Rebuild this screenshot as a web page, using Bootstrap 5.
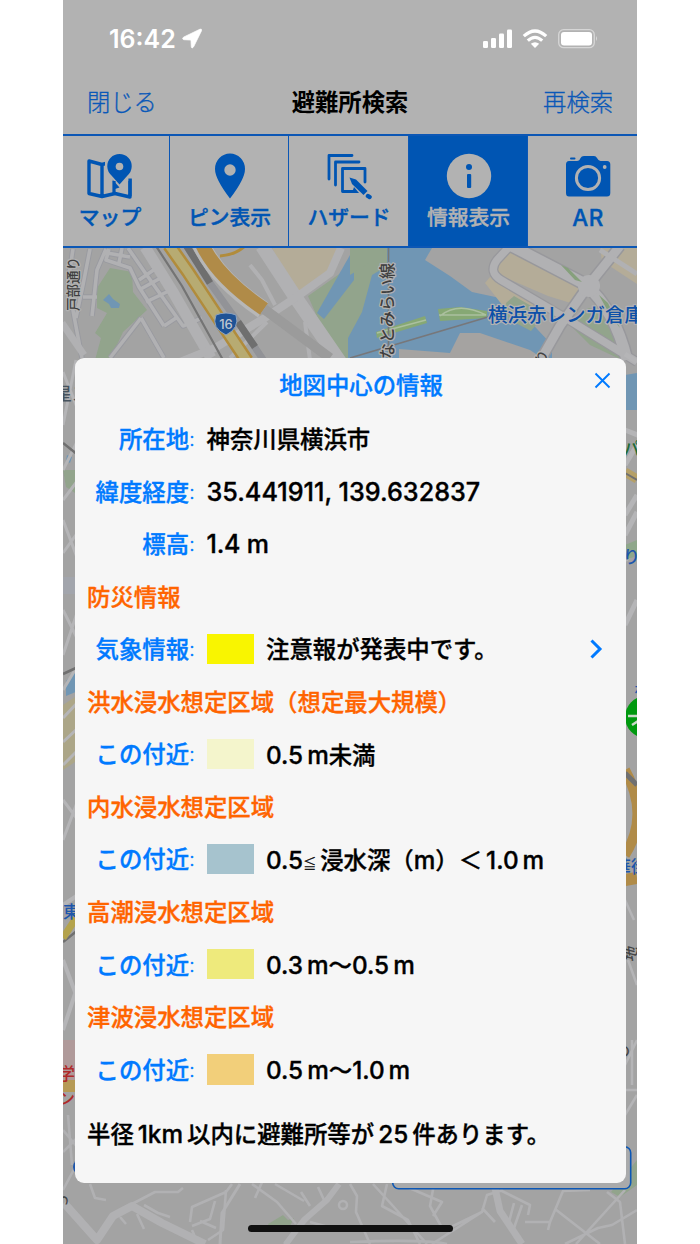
<!DOCTYPE html>
<html lang="ja">
<head>
  <meta charset="UTF-8">
  <meta name="viewport" content="width=device-width, initial-scale=1">
  <title>避難所検索</title>
  <link href="https://cdn.jsdelivr.net/npm/bootstrap@5.3.0/dist/css/bootstrap.min.css" rel="stylesheet">
  <style>
    body {
      background: #fff;
      font-family: Inter, "Noto Sans CJK JP", sans-serif;
      font-weight: 500;
      line-height: 1;
      overflow: hidden;
    }
    .phone { width: 574px; height: 1244px; background: #b2b2b2; }
    .status-bar { height: 78px; padding: 0 39px 0 46px; color: #fff; }
    .clock { font-size: 25px; font-weight: 600; }
    .title-bar { height: 56px; padding: 0 24px 6px; font-size: 23.3px; }
    .title-bar a { color: #0a58b8; font-weight: 300; text-decoration: none; width: 80px; -webkit-text-stroke: .3px #0a58b8; }
    .title-bar h1 { font-size: 23.3px; color: #000; font-weight: 700; }
    .tabs { height: 114px; margin: 0 -13px; border-top: 2px solid #0c57b5; border-bottom: 2px solid #0c57b5; }
    .tab-item { width: 119.5px; padding: 16px 0 0 1.5px; color: #0055b3; font-size: 20.8px; border-right: 1.5px solid #0c57b5; -webkit-text-stroke: .4px; }
    .tab-item.active { background: #0055b3; color: #b2b2b2; }
    .tab-item span { margin-top: 8px; }
    .tab-item .latin { font-size: 22.5px; margin-top: 7px; letter-spacing: .5px; }
    .map-area svg.map { position: absolute; left: 0; top: 0; }
    .info-panel { width: 551px; height: 825px; margin: 110px 0 0 11.5px; background: #f6f6f6; border-radius: 9px; font-size: 23.4px; color: #000; padding: 0 12.5px; -webkit-text-stroke: .35px; }
    .panel-title { height: 54.5px; color: #007aff; padding: 2px 0 0 22px; }
    .panel-title h2 { font-size: 23.4px; font-weight: 500; }
    .panel-close { position: absolute; right: 15px; top: 14px; }
    .info-row { height: 52.55px; }
    .info-row > .txt, .section-name { padding-top: 2px; }
    .info-label { width: 107.500px; color: #007aff; text-align: right; margin-right: 12px; white-space: nowrap; }
    .info-label::after { content: ":"; font-weight: 300; font-size: 19px; position: relative; top: -2px; }
    .section-name { color: #ff6400; }
    .swatch { width: 47px; height: 30.5px; margin-right: 12.5px; }
    .s-warn { background: #f9f500; }
    .s-flood { background: #f4f5cc; }
    .s-inland { background: #a6c3ce; }
    .s-surge { background: #eeea7c; }
    .s-tsunami { background: #f2cf7a; }
    .num { font-size: 24.3px; }
    .num-long { font-size: 25.2px; }
    .num-alt { font-size: 25px; letter-spacing: -.2px; }
    .gap-l { margin-left: 4px; }
    .gap-r { margin-right: 4px; }
    .leq { font-size: 13px; font-weight: 300; margin-right: 4px; position: relative; top: -1px; }
    .summary { height: 78px; }
    .home-bar { position: absolute; left: 185px; bottom: 12px; width: 205px; height: 7px; background: #101010; border-radius: 4px; }
  </style>
</head>
<body>
  <div class="phone mx-auto position-relative overflow-hidden d-flex flex-column">

    <div class="status-bar d-flex align-items-center justify-content-between flex-shrink-0">
      <div class="d-flex align-items-center">
        <span class="clock">16:42</span>
        <svg class="ms-1" width="24" height="22" viewBox="0 0 24 22"><path d="M20 1.200 L3.500 9.200 Q1.500 11.500 4.500 11.700 L11 12 L11.300 18.500 Q11.700 21.500 13.600 18.800 L21.500 2.700 Q22 .7 20 1.200Z" fill="#fff" stroke="#fff" stroke-width=".8" stroke-linejoin="round"/></svg>
      </div>
      <svg width="117" height="20" viewBox="0 0 117 20">
        <g fill="#fff">
          <rect x="2" y="12" width="5" height="7" rx="1.300"/>
          <rect x="10" y="9" width="5" height="10" rx="1.300"/>
          <rect x="18" y="4.500" width="5" height="14.500" rx="1.300"/>
          <rect x="26" y="0.500" width="5" height="18.500" rx="1.300"/>
          <path d="M54 19 L49.800 14.800 Q54 11.500 58.200 14.800Z"/>
          <rect x="80" y="3" width="31" height="13.500" rx="3"/>
          <path d="M115 7 q2 2.500 0 5z" opacity=".5"/>
        </g>
        <g fill="none" stroke="#fff" stroke-width="3.200">
          <path d="M42.800 7.200 Q54 -3.200 65.200 7.200"/>
          <path d="M46.800 11.600 Q54 5 61.200 11.600"/>
        </g>
        <rect x="77.700" y="0.700" width="35.600" height="18" rx="5" fill="none" stroke="#d6d6d6" stroke-width="1.300"/>
      </svg>
    </div>

    <nav class="title-bar d-flex align-items-center justify-content-between flex-shrink-0">
      <a href="#">閉じる</a>
      <h1 class="m-0">避難所検索</h1>
      <a href="#" class="text-end">再検索</a>
    </nav>

    <div class="tabs d-flex flex-shrink-0">
      <div class="tab-item flex-shrink-0 d-flex flex-column align-items-center">
        <svg width="48" height="48" viewBox="86 152 48 48">
          <path d="M89 161 L102 164.500 L115 161 L130 165 V197 L115 193.500 L102 196.500 L89 193.500Z M102 164.500 V196.500" fill="none" stroke="#0055b3" stroke-width="3.400" stroke-linejoin="round"/>
          <path d="M105 150 H134 V177 L127 182 L121 190 L114 183 L105 177Z" fill="#b2b2b2"/>
          <path d="M114 181 V193.500 M130 178.500 V196" stroke="#0055b3" stroke-width="3.200"/>
          <path d="M112.500 179.500 L119.500 187.500 L115 189Z" fill="#0055b3"/>
          <path d="M119.500 184.500 L111.500 175.500 A12.200 12.200 0 1 1 127.500 175.500Z" fill="#0055b3"/>
          <circle cx="119.500" cy="166.500" r="3.800" fill="#b2b2b2"/>
        </svg>
        <span>マップ</span>
      </div>
      <div class="tab-item flex-shrink-0 d-flex flex-column align-items-center">
        <svg width="48" height="48" viewBox="205 152 48 48">
          <path d="M229 198.500 Q214 179 214 169 A15 15.500 0 0 1 244 169 Q244 179 229 198.500Z" fill="#0055b3"/>
          <circle cx="229" cy="170" r="5.700" fill="#b2b2b2"/>
        </svg>
        <span>ピン表示</span>
      </div>
      <div class="tab-item flex-shrink-0 d-flex flex-column align-items-center">
        <svg width="48" height="48" viewBox="324 152 48 48">
          <g fill="none" stroke="#0055b3" stroke-width="2.800" stroke-linecap="round" stroke-linejoin="round">
            <path d="M328 179 V155.500 H351"/>
            <path d="M334.500 185 V162 H358"/>
            <path d="M354 191.500 H341.500 V168.500 H364 V182"/>
          </g>
          <path d="M348.500 177.500 L355 179.500 L366.500 191 L362.500 195 L351 184Z" fill="#0055b3"/>
          <path d="M353 187 L358 192.900 H351" fill="#0055b3"/>
          <path d="M367 196 L368.500 197" stroke="#0055b3" stroke-width="4.500" stroke-linecap="round"/>
        </svg>
        <span>ハザード</span>
      </div>
      <div class="tab-item active flex-shrink-0 d-flex flex-column align-items-center">
        <svg width="48" height="48" viewBox="444 152 48 48">
          <circle cx="468" cy="176" r="22.200" fill="#b2b2b2"/>
          <circle cx="468" cy="167" r="3" fill="#0055b3"/>
          <rect x="466" y="174" width="4.200" height="14" rx="1" fill="#0055b3"/>
        </svg>
        <span>情報表示</span>
      </div>
      <div class="tab-item flex-shrink-0 d-flex flex-column align-items-center">
        <svg width="48" height="48" viewBox="564 152 48 48">
          <path d="M569 161 H577 Q579.500 161 580.500 158 Q581.500 156 584 156 H594 Q596 156 597 158 Q598.500 161 600.500 161 H607 Q610.300 161 610.300 164.500 V193 Q610.300 196.500 607 196.500 H569 Q566 196.500 566 193 V164.500 Q566 161 569 161Z" fill="#0055b3"/>
          <rect x="570" y="157.500" width="5.500" height="2" rx="1" fill="#0055b3"/>
          <circle cx="588" cy="178" r="11.600" fill="none" stroke="#b2b2b2" stroke-width="3"/>
          <circle cx="604.700" cy="167" r="1.900" fill="#b2b2b2"/>
        </svg>
        <span class="latin">AR</span>
      </div>
    </div>

    <div class="map-area position-relative flex-grow-1">
      <svg class="map" width="574" height="996" viewBox="63 248 574 996" font-family="Inter, 'Noto Sans CJK JP', sans-serif">
        <rect x="63" y="248" width="574" height="996" fill="#a3a3a3"/>

        <!-- parks, water and blocks above the panel -->
        <path d="M110 268 L132 272 L133 292 L147 310 L123 332 L110 360 H95 L101 338 L95 333 L107 313 L97 308 V288Z" fill="#92a48c"/>
        <path d="M103 300 L109 294 L113 299 L120 304 L119 308 L111 308 L109 304Z" fill="#7096b4"/>
        <path d="M272 248 H341 L330 275 L310 290 L295 292Z" fill="#b4ac98"/>
        <path d="M308 296 L345 270 L366 248 H391 V280 L368 360 H336Z" fill="#92a48c"/>
        <path d="M354 248 L317 313 L324 319 L354 280Z" fill="#7096b4"/>
        <path d="M387 248 H432 L425 260 L450 276 L472 292 L500 298 L524 315 L552 345 V360 H348 V338 L362 312 L372 275 L387 266Z" fill="#7096b4"/>
        <path d="M399 349 L450 353 L460 333 L480 333 L530 350 L545 360 H399Z" fill="#a5a3a1"/>
        <path d="M350 275 L371 262 L387 248 H350Z" fill="#92a48c"/>
        <path d="M497 260 L511 247 L524 251 L585 284 L574 304 L548 296 L497 274Z" fill="#b4ac98"/>
        <path d="M485 283 L490 277 L535 303 L524 318 L503 306Z" fill="#b4ac98"/>
        <path d="M506 303 L514 296 L545 314 L531 331 L508 319Z" fill="#92a48c"/>
        <path d="M600 248 H637 V284 L602 261Z" fill="#b4ac98"/>
        <path d="M571 326 L588 308 L606 310 L628 356 L622 360 L590 345Z" fill="#92a48c"/>
        <path d="M376 332 L425 316 L427 323 L377 338Z M438 309 L460 307 L487 311 V318 L440 321Z" fill="#86a874"/>
        <path d="M377 333 L426 320 M439 315 L486 315 M440 316 Q458 301 486 315" stroke="#abc09f" stroke-width="1.500" fill="none"/>
        <path d="M350 358 L488 317" stroke="#77777a" stroke-width="1.800"/>
        <path d="M388.500 248 V359" stroke="#777" stroke-width="1.600"/>

        <!-- local streets -->
        <g fill="none" stroke="#999aa0" stroke-width="5.500" stroke-linejoin="round">
          <path d="M90 249 L83 285 L76 318 M73 249 L68 282 L74 316 L82 358 M106 249 L97 270 L92 316 M83 297 H97 M109 249 L106 260 L130 268 L139 287 L164 326 M128 248 L146 274 L183 326 L202 318 M139 290 L166 275 M146 302 L175 288 M158 267 L139 280 M164 326 L176 318 M107 253 L130 257 M122 248 L119 263 M141 318 L110 358 M141 318 L164 358"/>
        </g>
        <g fill="none" stroke="#b1b1b3" stroke-width="3.600" stroke-linejoin="round">
          <path d="M90 249 L83 285 L76 318 M73 249 L68 282 L74 316 L82 358 M106 249 L97 270 L92 316 M83 297 H97 M109 249 L106 260 L130 268 L139 287 L164 326 M128 248 L146 274 L183 326 L202 318 M139 290 L166 275 M146 302 L175 288 M158 267 L139 280 M164 326 L176 318 M107 253 L130 257 M122 248 L119 263 M141 318 L110 358 M141 318 L164 358"/>
        </g>
        <g fill="none" stroke="#b1b1b3">
          <path d="M145 247 L173 292 L211 358" stroke-width="11"/>
          <path d="M262 246 L296 298 L340 362" stroke-width="14"/>
          <path d="M180 362 L215 348 L263 319 L298 296 L330 273 L341 248" stroke-width="8"/>
          <path d="M62 323 L84 355" stroke-width="7"/>
          <path d="M230 358 L267 322 M305 322 L310 360 M250 265 L262 280 L275 305" stroke-width="4"/>
        </g>
        <path d="M156 246 L182 286 L223 360" stroke="#747474" stroke-width="2.200" fill="none"/>
        <path d="M169 245 L188 272 L221 322 L247 361" stroke="#b18c3c" stroke-width="14" fill="none"/>
        <path d="M169 245 L188 272 L221 322 L247 361" stroke="#b7ab72" stroke-width="9" fill="none"/>
        <path d="M186 245 L210 283 L238 322 L264 361" stroke="#929397" stroke-width="7" fill="none"/>
        <path d="M186 245 L210 283 M238 322 L255 347" stroke="#6f6f6f" stroke-width="7" fill="none"/>
        <path d="M201 244 Q216 278 263 310" stroke="#b7b7b7" stroke-width="18" fill="none"/>
        <path d="M202 244 Q217 277 264 309" stroke="#b08b48" stroke-width="14" fill="none"/>
        <path d="M220 256 Q235 255 245 246" stroke="#b18c3c" stroke-width="3" fill="none"/>
        <path d="M264 309 L330 358" stroke="#9b9b9b" stroke-width="10" fill="none"/>

        <!-- harbour streets -->
        <g fill="none" stroke="#98989c" stroke-linejoin="round">
          <path d="M510 246 L497 260 Q488 272 501 280 L564 317 L637 362" stroke-width="10"/>
          <path d="M512 246 L585 284 Q615 310 627 360" stroke-width="14"/>
          <path d="M620 246 L588 286 L560 326 L540 361" stroke-width="12"/>
        </g>
        <g fill="none" stroke="#b1b1b3" stroke-linejoin="round">
          <path d="M510 246 L497 260 Q488 272 501 280 L564 317 L637 362" stroke-width="7.500"/>
          <path d="M512 246 L585 284 Q615 310 627 360" stroke-width="11"/>
          <path d="M620 246 L588 286 L560 326 L540 361" stroke-width="9"/>
          <path d="M600 250 L637 274" stroke-width="5"/>
        </g>
        <circle cx="589" cy="286" r="11" fill="#b1b1b3"/>
        <path d="M561 265 L568 268 L582 282 L575 280Z M599 295 L608 303 L620 328 L610 315Z" fill="#86a07c"/>

        <!-- strip left of the panel -->
        <path d="M63 470 H78 V495 L66 487Z" fill="#92a48c"/>
        <path d="M67 455 l5 2 -2 6 -4 -2Z M66 681 l8 -8 h4 v18 l-12 5Z" fill="#7096b4"/>
        <rect x="63" y="577" width="15" height="17" fill="#a2a5ac"/>
        <path d="M63 705 L78 695 V760 L63 770Z" fill="#aca688"/>
        <g fill="none" stroke="#b5b5b7" stroke-width="3">
          <path d="M63 372 L78 410 M63 425 L76 360 M63 470 L78 440 M63 500 L78 480 M63 520 L78 560 M63 553 L78 532 M63 610 L78 640 M63 655 L78 610 M63 690 L78 665 M63 718 L78 702 M63 742 L78 728 M63 765 L78 750 M63 800 L78 820 M63 840 L78 800"/>
        </g>
        <path d="M63 443 L78 455 M63 674 L78 667 M63 942 L78 930" stroke="#707070" stroke-width="2.500"/>
        <path d="M63 938 L78 915" stroke="#b4a34c" stroke-width="7"/>
        <path d="M63 905 L78 895 M63 960 L78 1000 M63 1030 L78 985" stroke="#b5b5b7" stroke-width="4"/>
        <rect x="63" y="1040" width="15" height="40" fill="#b09a9a"/>
        <rect x="63" y="1080" width="15" height="12" fill="#b69a55"/>
        <g font-size="17">
          <text x="55" y="400" fill="#47535e">星ス</text>
          <text x="63" y="918" fill="#1e56ab">東</text>
          <text x="58" y="1080" fill="#b02a2a">学</text>
          <text x="58" y="1105" fill="#b02a2a">ン</text>
        </g>

        <!-- strip right of the panel -->
        <path d="M625 375 L637 373 V410 H625Z" fill="#7096b4"/>
        <path d="M625 354 L637 362 M625 430 L640 436 M625 465 L640 440 M625 515 L637 495 M625 535 L637 512 M625 625 L637 600 M625 560 L637 548" stroke="#b5b5b7" stroke-width="5"/>
        <path d="M625 472 L637 479" stroke="#b5a068" stroke-width="9"/>
        <path d="M625 473 L637 480" stroke="#707070" stroke-width="2"/>
        <path d="M625 545 L637 540 V556 L625 560Z" fill="#8fa78b"/>
        <path d="M625 770 Q650 815 625 855" fill="none" stroke="#b08b48" stroke-width="10"/>
        <path d="M625 773 L637 785" stroke="#707070" stroke-width="5"/>
        <path d="M625 880 L637 878" stroke="#b08b48" stroke-width="12"/>
        <circle cx="646" cy="717" r="21" fill="#00990f"/>
        <path d="M628 716 H638 M632 725 L638 721" stroke="#c9d8c9" stroke-width="2.500"/>
        <g font-size="17">
          <text x="623" y="455" fill="#1d6b35">パ</text>
          <text x="623" y="563" fill="#1e56ab">り</text>
          <text x="634" y="694" fill="#1e56ab" font-size="13">ホ</text>
          <text x="614" y="873" fill="#1e56ab">華街</text>
          <text transform="translate(634 962) rotate(-75)" fill="#444" font-size="15">地</text>
          <text x="616" y="1056" fill="#444" font-size="14">の</text>
        </g>
        <path d="M625 900 L634 920 M628 960 L637 985 M625 1065 L637 1040 M625 1090 H637 M625 1115 L637 1095 M632 1040 V1085" stroke="#b5b5b7" stroke-width="2.500"/>

        <!-- hillside streets below the panel -->
        <path d="M268 1224 L283 1215 L288 1220 L294 1218 L287 1232 H272Z" fill="#92a48c"/>
        <path d="M611 1192 L637 1160 V1185 L620 1197Z" fill="#92a48c"/>
        <g fill="none" stroke="#b1b1b3" stroke-width="2.600" stroke-linejoin="round">
          <path d="M90 1184 L95 1198 L106 1200 M132 1204 L155 1192 L178 1192 L183 1188 M144 1205 L158 1213 L170 1217 M137 1214 L144 1229 M120 1217 L126 1224"/>
          <path d="M190 1222 L192 1207 L226 1192 L232 1184 M215 1201 L210 1219 L192 1226 M200 1221 L216 1228 M226 1190 L223 1230 L208 1240 M192 1230 L198 1244 M63 1130 L78 1148 M63 1152 L78 1137 M68 1115 L72 1165 M63 1190 L80 1158"/>
          <path d="M252 1184 L277 1202 L296 1224 M275 1184 L304 1201 M301 1192 L310 1206 M318 1187 L324 1200 M255 1198 L263 1180 M310 1222 L332 1228 M284 1244 L305 1222 L337 1187"/>
          <path d="M350 1184 L357 1196 L356 1212 L370 1244 M373 1184 L393 1206 L427 1244 M387 1184 L382 1206 L408 1220 L420 1244 M400 1184 L442 1202 L433 1216 M434 1184 L430 1206 L441 1226 M350 1242 Q425 1239 447 1244"/>
          <path d="M432 1244 L482 1212 L487 1195 L503 1190 M451 1227 L482 1212 M482 1208 L495 1222 M500 1190 L530 1205 L528 1215 M514 1203 L509 1222 M522 1205 L514 1228 M525 1222 L550 1222 L563 1191 L590 1190 M550 1222 L548 1230 M555 1209 L600 1244 M576 1244 L625 1190 M565 1244 L598 1228 L612 1225 L637 1210 M607 1192 L620 1202 L625 1244"/>
        </g>
        <g fill="none" stroke="#b1b1b3" stroke-linejoin="round">
          <path d="M64 1203 L97 1240 L113 1216 L132 1206 L162 1223 L205 1244" stroke-width="8"/>
          <path d="M286 1244 L304 1220 L327 1200 L339 1184" stroke-width="6"/>
          <path d="M495 1188 L500 1211 L522 1244" stroke-width="7"/>
          <path d="M240 1184 L222 1213 L220 1244" stroke-width="3"/>
          <circle cx="343" cy="1205" r="4" stroke-width="2.500"/>
        </g>
        <text transform="translate(64 1208) rotate(-60)" font-size="13" fill="#444">う</text>

        <circle cx="81" cy="1167" r="8" fill="#1e56ab"/>
        <rect x="392.700" y="1146.700" width="238" height="42" rx="6" fill="#a9aaab" stroke="#0c57b5" stroke-width="1.600"/>

        <path d="M216 315 Q226 311 236 315 Q240 328 226 335 Q211 328 216 315Z" fill="#1e5396" stroke="#8ea3be"/>
        <text x="226" y="329" text-anchor="middle" font-size="13" fill="#c0c8d2">16</text>

        <g paint-order="stroke" stroke="#b2b2b2" stroke-width="2.500" stroke-linejoin="round">
          <text transform="translate(78 311) rotate(-90)" font-size="13.500" fill="#3e3e3e">戸部通り</text>
          <text transform="translate(393 375) rotate(-90)" font-size="16" fill="#3e3e3e">みなとみらい線</text>
          <text x="488" y="321.500" font-size="19.500" fill="#0d50a8">横浜赤レンガ倉庫</text>
          <text transform="translate(543 366) rotate(-60)" font-size="14" fill="#444">り</text>
        </g>
      </svg>

      <section class="info-panel position-relative">
        <div class="panel-title d-flex align-items-center justify-content-center">
          <h2 class="m-0">地図中心の情報</h2>
          <svg class="panel-close" width="17" height="17" viewBox="0 0 17 17"><path d="M1.500 1.500 L15.500 15.500 M15.500 1.500 L1.500 15.500" stroke="#007aff" stroke-width="1.900"/></svg>
        </div>

        <div class="info-row d-flex align-items-center">
          <div class="info-label txt">所在地</div><div class="txt">神奈川県横浜市</div>
        </div>
        <div class="info-row d-flex align-items-center">
          <div class="info-label txt">緯度経度</div><div class="txt num-long">35.441911, 139.632837</div>
        </div>
        <div class="info-row d-flex align-items-center">
          <div class="info-label txt">標高</div><div class="txt num-alt">1.4 m</div>
        </div>

        <div class="info-row section-name d-flex align-items-center">防災情報</div>
        <div class="info-row d-flex align-items-center">
          <div class="info-label txt">気象情報</div><div class="swatch s-warn"></div><div class="txt">注意報が発表中です。</div>
          <svg class="ms-auto me-2" width="18" height="20" viewBox="0 0 18 20"><path d="M4.500 1.500 L13 10 L4.500 18.500" fill="none" stroke="#007aff" stroke-width="3"/></svg>
        </div>

        <div class="info-row section-name d-flex align-items-center">洪水浸水想定区域（想定最大規模）</div>
        <div class="info-row d-flex align-items-center">
          <div class="info-label txt">この付近</div><div class="swatch s-flood"></div><div class="txt"><span class="num">0.5<span class="gap-l">m</span></span>未満</div>
        </div>

        <div class="info-row section-name d-flex align-items-center">内水浸水想定区域</div>
        <div class="info-row d-flex align-items-center">
          <div class="info-label txt">この付近</div><div class="swatch s-inland"></div><div class="txt"><span class="num">0.5</span><span class="leq">≦</span>浸水深（<span class="num">m</span>）<span class="gap-r">＜</span><span class="num">1.0<span class="gap-l">m</span></span></div>
        </div>

        <div class="info-row section-name d-flex align-items-center">高潮浸水想定区域</div>
        <div class="info-row d-flex align-items-center">
          <div class="info-label txt">この付近</div><div class="swatch s-surge"></div><div class="txt"><span class="num">0.3<span class="gap-l">m</span></span>〜<span class="num">0.5<span class="gap-l">m</span></span></div>
        </div>

        <div class="info-row section-name d-flex align-items-center">津波浸水想定区域</div>
        <div class="info-row d-flex align-items-center">
          <div class="info-label txt">この付近</div><div class="swatch s-tsunami"></div><div class="txt"><span class="num">0.5<span class="gap-l">m</span></span>〜<span class="num">1.0<span class="gap-l">m</span></span></div>
        </div>

        <div class="summary d-flex align-items-center"><div>半径<span class="num gap-l gap-r">1km</span>以内に避難所等が<span class="num gap-l gap-r">25</span>件あります。</div></div>
      </section>

      <div class="home-bar"></div>
    </div>
  </div>
  <script src="https://cdn.jsdelivr.net/npm/bootstrap@5.3.0/dist/js/bootstrap.bundle.min.js"></script>
</body>
</html>
